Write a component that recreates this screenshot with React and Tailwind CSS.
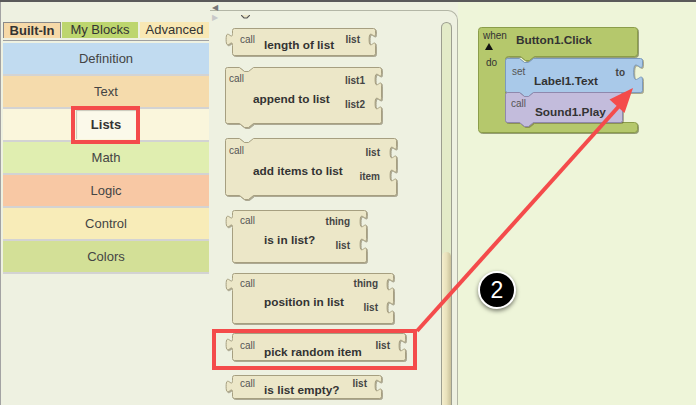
import React from "react";

const font = "font-['Liberation_Sans',Arial,Helvetica,sans-serif]";

const categories = [
  { name: "Definition", bg: "bg-[#c1dbf0]" },
  { name: "Text", bg: "bg-[#f5dbac]" },
  { name: "Lists", bg: "bg-[#faf6dc]", selected: true },
  { name: "Math", bg: "bg-[#e0eeb0]" },
  { name: "Logic", bg: "bg-[#f8c8a4]" },
  { name: "Control", bg: "bg-[#f8ecb8]" },
  { name: "Colors", bg: "bg-[#d3e097]" },
];

// drawer blocks, top to bottom
const drawerBlocks = [
  {
    text: "length of list", w: 150, h: 27, plug: true, sockets: [1], row: true,
    cls: "mt-[17px] w-[150px] h-[27px]",
    callCls: "ml-[15px] mt-[6px]", mainCls: "ml-[9px] mt-[10px]",
    rightCls: "mr-[15px]", right: [{ t: "list", cls: "mt-[6px]" }],
  },
  {
    text: "append to list", w: 156, h: 56, notch: true, tab: true, sockets: [2, 26],
    cls: "mt-[12px] w-[156px] h-[56px]",
    callCls: "ml-[4px] mt-[6px]", mainCls: "ml-[28px] mt-[7px]",
    rightCls: "mr-[16px]", right: [{ t: "list1", cls: "mt-[8px]" }, { t: "list2", cls: "mt-[12px]" }],
  },
  {
    text: "add items to list", w: 171, h: 57, notch: true, tab: true, sockets: [4, 27],
    cls: "mt-[15px] w-[171px] h-[57px]",
    callCls: "ml-[4px] mt-[7px]", mainCls: "ml-[28px] mt-[7px]",
    rightCls: "mr-[16px]", right: [{ t: "list", cls: "mt-[9px]" }, { t: "item", cls: "mt-[12px]" }],
  },
  {
    text: "is in list?", w: 141, h: 52, plug: true, sockets: [1, 24],
    cls: "mt-[15px] w-[141px] h-[52px]",
    callCls: "ml-[15px] mt-[5px]", mainCls: "ml-[39px] mt-[6px]",
    rightCls: "mr-[16px]", right: [{ t: "thing", cls: "mt-[6px]" }, { t: "list", cls: "mt-[12px]" }],
  },
  {
    text: "position in list", w: 168, h: 50, plug: true, sockets: [1, 24],
    cls: "mt-[11px] w-[168px] h-[50px]",
    callCls: "ml-[15px] mt-[5px]", mainCls: "ml-[39px] mt-[5px]",
    rightCls: "mr-[15px]", right: [{ t: "thing", cls: "mt-[5px]" }, { t: "list", cls: "mt-[12px]" }],
  },
  {
    text: "pick random item", w: 180, h: 27, plug: true, sockets: [2], row: true,
    cls: "mt-[10px] w-[180px] h-[27px]",
    callCls: "ml-[15px] mt-[7px]", mainCls: "ml-[9px] mt-[12px]",
    rightCls: "mr-[15px]", right: [{ t: "list", cls: "mt-[7px]" }],
  },
  {
    text: "is list empty?", w: 156, h: 23, plug: true, sockets: [0], row: true,
    cls: "mt-[15px] w-[156px] h-[23px]",
    callCls: "ml-[15px] mt-[3px]", mainCls: "ml-[9px] mt-[8px]",
    rightCls: "mr-[14px]", right: [{ t: "list", cls: "mt-[3px]" }],
  },
];

function blockPath({ w, h, plug, notch, tab, sockets = [], s = 0.8, py = 1 }) {
  const x0 = plug ? 7 : 0;
  let d = `M ${x0 + 2} 0`;
  if (notch) d += ` H ${x0 + 14} l 5 4 l 4 0 l 5 -4`;
  d += ` H ${w - 2} Q ${w} 0 ${w} 2`;
  sockets.forEach((sy) => {
    d += ` V ${sy + 5 * s} c 0 ${10 * s} ${-8 * s} ${-8 * s} ${-8 * s} ${7.5 * s} s ${8 * s} ${-2.5 * s} ${8 * s} ${7.5 * s}`;
  });
  d += ` V ${h - 2} Q ${w} ${h} ${w - 2} ${h}`;
  if (tab) d += ` H ${x0 + 28} l -5 4 l -4 0 l -5 -4`;
  d += ` H ${x0 + 2} Q ${x0} ${h} ${x0} ${h - 2}`;
  if (plug) {
    d += ` V ${py + 20 * s} c 0 ${-10 * s} ${-8 * s} ${8 * s} ${-8 * s} ${-7.5 * s} s ${8 * s} ${2.5 * s} ${8 * s} ${-7.5 * s}`;
  }
  d += ` V 2 Q ${x0} 0 ${x0 + 2} 0 Z`;
  return d;
}

function Shape({ fill = "#ece7c8", stroke = "#a69f80", ...opts }) {
  return (
    <svg
      className="absolute left-0 top-0 overflow-visible drop-shadow-[1px_1px_0_rgba(90,80,50,0.45)]"
      width={opts.w}
      height={opts.h}
    >
      <g transform="translate(0.5,0.5)">
        <path d={blockPath(opts)} fill={fill} stroke={stroke} strokeWidth="1" />
      </g>
    </svg>
  );
}

const callCls = "text-[10px] leading-[12px] text-[#555] whitespace-nowrap";
const mainCls = "text-[11.8px] leading-[14px] font-bold text-[#333] whitespace-nowrap";
const sockCls = "text-[10px] leading-[12px] font-bold text-[#444] whitespace-nowrap";

function DrawerBlock({ b }) {
  return (
    <div className={`relative flex ${b.cls}`}>
      <Shape {...b} />
      <div className={`relative flex ${b.row ? "flex-row items-start" : "flex-col items-start"}`}>
        <span className={`${callCls} ${b.callCls}`}>call</span>
        <span className={`${mainCls} ${b.mainCls}`}>{b.text}</span>
      </div>
      <div className={`relative ml-auto flex flex-col items-end ${b.rightCls}`}>
        {b.right.map((r) => (
          <span key={r.t} className={`${sockCls} ${r.cls}`}>
            {r.t}
          </span>
        ))}
      </div>
    </div>
  );
}

function EventBlock() {
  const W = 159;
  const green = `M 3 0 H ${W - 3} Q ${W} 0 ${W} 3 V 26 Q ${W} 29 ${W - 3} 29 H 56 l -5 4 l -4 0 l -5 -4 H 30 Q 27 29 27 32 V 92 Q 27 95 30 95 H ${W - 3} Q ${W} 95 ${W} 98 V 102 Q ${W} 105 ${W - 3} 105 H 3 Q 0 105 0 102 V 3 Q 0 0 3 0 Z`;
  return (
    <div className="absolute left-[20px] top-[25px] w-[165px] h-[106px]">
      <svg
        className="absolute left-0 top-0 overflow-visible drop-shadow-[1px_1px_0_rgba(60,70,20,0.5)]"
        width="160"
        height="106"
      >
        <g transform="translate(0.5,0.5)">
          <path d={green} fill="#b5c86c" stroke="#8b9d4a" strokeWidth="1" />
        </g>
      </svg>
      <div className="relative flex flex-col">
        {/* header */}
        <div className="flex h-[29px] items-start">
          <div className="flex flex-col items-start ml-[5px] mt-[3px]">
            <span className="text-[10px] leading-[12px] text-[#333]">when</span>
            <svg className="ml-[2px] mt-[1px]" width="8" height="7">
              <path d="M4 0 L8 7 L0 7 Z" fill="#111" />
            </svg>
          </div>
          <span className={`${mainCls} ml-[9px] mt-[6px]`}>Button1.Click</span>
        </div>
        <div className="flex">
          <div className="w-[27px]">
            <span className="block text-[10px] leading-[12px] text-[#333] ml-[8px] mt-[1px]">do</span>
          </div>
          <div className="flex flex-col items-start mt-[2px]">
            <div className="relative flex w-[137px] h-[34px]">
              <Shape w={137} h={34} notch tab sockets={[0]} s={1.1} fill="#a9c9e9" stroke="#7b9abd" />
              <div className="relative flex flex-col items-start">
                <span className={`${callCls} ml-[7px] mt-[8px]`}>set</span>
                <span className={`${mainCls} ml-[29px] -mt-[4px]`}>Label1.Text</span>
              </div>
              <span className={`${sockCls} relative ml-auto mr-[17px] mt-[9px]`}>to</span>
            </div>
            <div className="relative flex w-[117px] h-[30px]">
              <Shape w={117} h={30} notch tab fill="#c3bcdc" stroke="#8f88ad" />
              <div className="relative flex flex-col items-start">
                <span className={`${callCls} ml-[6px] mt-[6px]`}>call</span>
                <span className={`${mainCls} ml-[30px] -mt-[5px]`}>Sound1.Play</span>
              </div>
            </div>
          </div>
        </div>
      </div>
    </div>
  );
}

export default function App() {
  return (
    <div className={`relative w-[696px] h-[405px] overflow-hidden bg-[#eef1e1] border-t-2 border-[#5a5a5a] ${font}`}>
      <div className="flex h-full">
        {/* left palette */}
        <div className="w-[210px] shrink-0 border-l border-[#a3a3a3] pl-[2px] pt-[20px]">
          <div className="flex h-[16px] text-[13px] leading-[15px] text-[#333]">
            <div className="w-[58px] bg-[#f6d9a8] border border-b-0 border-[#8a8a8a] font-bold text-center">Built-In</div>
            <div className="ml-[1px] w-[76px] bg-[#bdd66e] text-center">My Blocks</div>
            <div className="ml-[2px] w-[69px] bg-[#f8e8b4] text-center">Advanced</div>
          </div>
          <div className="mt-[2px] h-px w-[206px] bg-[#a0a0a0]" />
          <div className="mt-[2px] flex w-[206px] flex-col">
            {categories.map((c) => (
              <div
                key={c.name}
                className={`flex h-[33px] items-center justify-center border-b-2 border-[#d3d3d3] text-[13px] text-[#444] ${c.bg}`}
              >
                {c.selected ? (
                  <span className="flex h-[29px] w-[60px] items-center justify-center bg-[#fbf9ea] font-bold text-[#333] shadow-[inset_1px_1px_1px_rgba(0,0,0,0.2)]">
                    {c.name}
                  </span>
                ) : (
                  c.name
                )}
              </div>
            ))}
          </div>
        </div>

        {/* drawer */}
        <div className="relative w-[248px] shrink-0">
          <div className="absolute left-[2px] top-[2px] text-[8px] leading-[8px] text-[#777]">◀</div>
          <div className="absolute left-[2px] top-[12px] text-[8px] leading-[8px] text-[#c8c8c8]">▶</div>
          <div className="mt-[8px] flex h-[400px] rounded-tr-[10px] border-t border-r border-[#b3b6a6] bg-[#eef1e1]">
            <div className="flex flex-1 flex-col items-start pl-[15px]">
              <svg className="absolute left-[31px] top-[13px]" width="9" height="4">
                <path d="M0 0 l 3 3 l 3 0 l 3 -3" fill="#ece7c8" stroke="#555" strokeWidth="1.2" />
              </svg>
              {drawerBlocks.map((b) => (
                <DrawerBlock key={b.text} b={b} />
              ))}
            </div>
            <div className="mr-[5px] mt-[11px] flex w-[11px] flex-col rounded-t-full border border-b-0 border-[#9c9e90] bg-[#e3ebc8]">
              <div className="mt-[229px] flex-1 rounded-t-full bg-gradient-to-r from-[#f4eecd] via-[#e8e1bb] to-[#c9c19a]" />
            </div>
          </div>
        </div>

        {/* workspace */}
        <div className="relative flex-1 bg-[#eef5d9]">
          <EventBlock />
        </div>
      </div>

      {/* annotations */}
      <div className="absolute left-[71px] top-[104px] h-[38px] w-[69px] border-4 border-[#f44b4b]" />
      <div className="absolute left-[212px] top-[327px] h-[41px] w-[205px] border-4 border-[#f44b4b]" />
      <svg className="absolute left-0 top-0" width="696" height="405">
        <line x1="417" y1="329" x2="620" y2="103" stroke="#f44b4b" strokeWidth="4" />
        <polygon points="633,86 624.5,111 609.5,97.5" fill="#f44b4b" />
      </svg>
      <div className="absolute left-[478px] top-[269px] flex h-[38px] w-[38px] items-center justify-center rounded-full border-2 border-white bg-black text-[23px] leading-none text-white shadow-[0_2px_4px_rgba(0,0,0,0.5)]">
        2
      </div>
    </div>
  );
}
